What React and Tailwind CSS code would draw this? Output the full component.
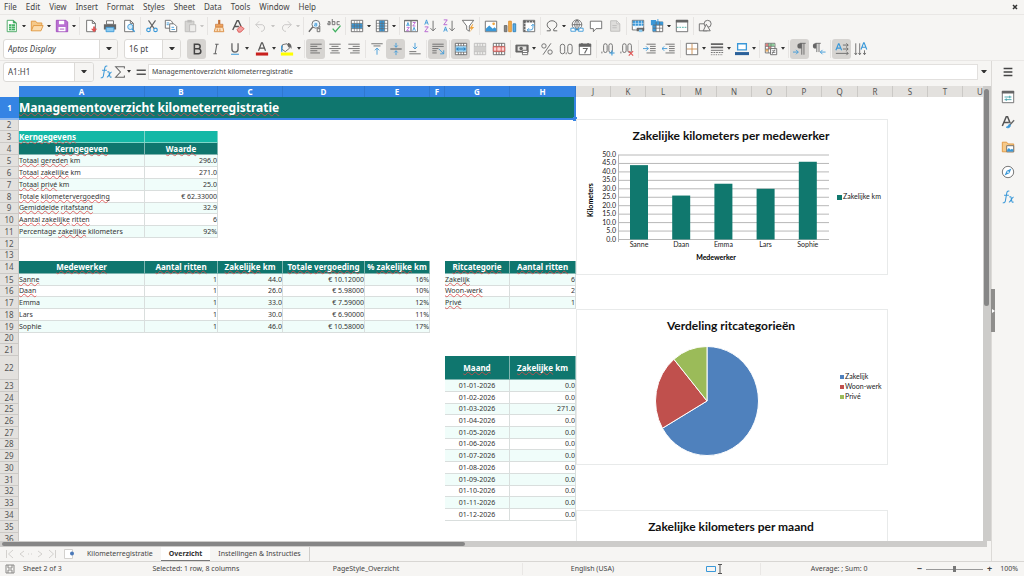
import { useState } from 'react';
import clsx from 'clsx';

const GRAY = '#666666';
const BLUE = '#3a98d8';

/* ---------- icons, all on a 16x16 canvas ---------- */

const sheetPage = <path d="M3 1.5h6.5L13 5v9.5H3zM9.5 1.5V5H13" fill="#fff" stroke={GRAY} />;
const sheetSquare = <path d="M1.5 1.5h13v13h-13z" fill="#fff" stroke={GRAY} />;
const gridLines = 'M1.5 5h13M1.5 8h13M1.5 11h13M5 2v12M8 2v12M11 2v12';

const icons = {
  new: (
    <>
      <path d="M2.5 1.5h7l3.5 3v10H2.5z" fill="#fff" stroke="#3fa35c" />
      <path d="M4.5 6h7v7h-7z" fill="#3fb05f" />
      <path d="M4.5 8.5h7M4.5 10.8h7M7.5 6v7" stroke="#d8f2df" strokeWidth=".7" />
      <path d="M9.5 1.5v3H13" fill="#3fb05f" stroke="#3fa35c" />
    </>
  ),
  open: (
    <>
      <path d="M1.5 13.5v-11h5l1.5 2h5.5v3" fill="#f5c98a" stroke="#e0953a" />
      <path d="M1.5 13.5l2.5-6h11l-2.5 6z" fill="#fbdcae" stroke="#e0953a" />
    </>
  ),
  save: (
    <>
      <path d="M1.5 1.5h11l2 2v11h-13z" fill="#b96fd2" stroke="#a04cbc" />
      <path d="M4.5 2h6v4h-6zM4 9h8v5H4z" fill="#fff" />
      <path d="M5.5 11.5h5" stroke="#a04cbc" />
    </>
  ),
  pdf: (
    <>
      {sheetPage}
      <path d="M8 11h2.5V8.5h2V11H15l-3.5 4z" fill="#e05252" />
    </>
  ),
  print: (
    <>
      <path d="M4 2h8v4H4z" fill="#fff" stroke={GRAY} />
      <path d="M1 6h14v6H1z" fill={GRAY} />
      <path d="M3.5 9.5h9v5h-9z" fill="#8ccbf0" stroke={BLUE} />
    </>
  ),
  preview: (
    <>
      {sheetPage}
      <circle cx="9.5" cy="9" r="3" fill="#d4ecfa" stroke={BLUE} />
      <path d="M11.5 11.5l3 3" stroke={BLUE} strokeWidth="1.6" />
    </>
  ),
  cut: (
    <>
      <path d="M4 1.5l6.5 9.5M12 1.5L5.5 11" stroke={GRAY} strokeWidth="1.3" />
      <circle cx="4" cy="12.5" r="2" stroke={BLUE} strokeWidth="1.3" />
      <circle cx="12" cy="12.5" r="2" stroke={BLUE} strokeWidth="1.3" />
    </>
  ),
  copy: (
    <>
      <path d="M1.5 1.5h6l2 2v7h-8z" fill="#fff" stroke={GRAY} />
      <path d="M6.5 5.5h5l3 3v6h-8z" fill="#fff" stroke={GRAY} />
      <path d="M3 4.5h3M3 6.5h2.5M8.5 9.5h3M8.5 12h4" stroke={BLUE} />
    </>
  ),
  paste: (
    <>
      <path d="M2.5 2.5h10v12h-10z" fill="#d6d5d3" stroke="#bdbcba" />
      <path d="M5 1h5v3H5z" fill="#bdbcba" />
      <path d="M7.5 6.5h7v8h-7z" fill="#eeedeb" stroke="#bdbcba" />
    </>
  ),
  brush: (
    <>
      <path d="M7 1h2.5v5H7z" fill="#c0703a" />
      <path d="M4 6h8.5v3H4z" fill="#f0a45a" stroke="#c0703a" strokeWidth=".7" />
      <path d="M4 9.5h8.5l1 5h-11z" fill="#fbe2c3" stroke="#d98a3e" />
      <path d="M6 11v3M9 11v3" stroke="#d98a3e" />
    </>
  ),
  clear: (
    <>
      <path d="M2 12.5L7 2h1.5l3 6.5M4 8.5h5" stroke="#555555" strokeWidth="1.6" />
      <path d="M7 12l4-4 4 3-4 4H8.5z" fill="#f2a0a0" stroke="#d9534f" />
    </>
  ),
  undo: <path d="M6 2.5l-4 4 4 4M2 6.5h7.5a4 4 0 0 1 0 7.5H8" stroke="#c6c5c3" />,
  redo: <path d="M10 2.5l4 4-4 4M14 6.5H6.5a4 4 0 0 0 0 7.5H8" stroke="#c6c5c3" />,
  find: (
    <>
      <circle cx="9" cy="6" r="4.5" fill="#eef7fd" stroke={GRAY} />
      <path d="M5.5 9L1 14.5" stroke={GRAY} strokeWidth="1.6" />
      <path d="M7.5 5H10v3H7.5V6.5H10" stroke={BLUE} strokeWidth=".9" />
      <path d="M13.5 8v6.5h-3V11h3" stroke={GRAY} />
    </>
  ),
  spell: (
    <>
      <path d="M1 3h2.5v3.5H1V4.5h2.5M6 0v6.5h3V3H6M14.5 3h-3v3.5h3" stroke={GRAY} />
      <path d="M6.5 11l3 3.5 6-7" stroke="#3fb05f" strokeWidth="1.4" />
    </>
  ),
  rows: (
    <>
      {sheetSquare}
      <path d="M2 5h12v6H2z" fill={BLUE} />
      <path d={gridLines} stroke={GRAY} strokeWidth=".7" />
    </>
  ),
  columns: (
    <>
      {sheetSquare}
      <path d="M5 2h6v12H5z" fill={BLUE} />
      <path d={gridLines} stroke={GRAY} strokeWidth=".7" />
    </>
  ),
  sort: (
    <>
      <path d="M.5 1.5h15v13H.5z" fill="#fff" stroke={GRAY} />
      <path d="M.5 2h15M8 2v12" stroke={GRAY} strokeWidth="1.3" />
      <path d="M3 8l1.5-4L6 8M3.5 7h2" stroke={BLUE} />
      <path d="M3 9.5h3l-3 4h3M10 4h3l-3 4h3" stroke="#b45fd0" />
      <path d="M10 13.5l1.5-4 1.5 4" stroke={BLUE} />
    </>
  ),
  sortAsc: (
    <>
      <path d="M2 6.5L4 1l2 5.5M2.8 4.5h2.5" stroke={BLUE} />
      <path d="M2 9h4l-4 5.5h4" stroke="#b45fd0" />
      <path d="M11.5 2v11.5M8.5 10.5l3 3 3-3" stroke={GRAY} />
    </>
  ),
  sortDesc: (
    <>
      <path d="M2 1h4L2 6.5h4" stroke="#b45fd0" />
      <path d="M2 14.5L4 9l2 5.5M2.8 12.5h2.5" stroke={BLUE} />
      <path d="M11.5 2v11.5M8.5 10.5l3 3 3-3" stroke={GRAY} />
    </>
  ),
  filter: (
    <>
      <path d="M1.5 1.5h13L9.5 8v6l-3-2V8z" fill="#fff" stroke={GRAY} />
      <path d="M13 6l-3.5 5H12L10 15l5-6h-2.5L14 6z" fill="#f0a43c" />
    </>
  ),
  image: (
    <>
      <path d="M1.5 2.5h13v12h-13z" fill="#fff" stroke={GRAY} />
      <path d="M2 14v-3l4-3.5 4 3.5 2-1.5 2 1.5v3z" fill={BLUE} />
      <circle cx="11" cy="5.5" r="1.5" fill="#f0a43c" />
    </>
  ),
  chart: (
    <>
      <path d="M1.5 7.5h3v7h-3z" fill="#8a8987" stroke={GRAY} />
      <path d="M6.5 2.5h3v12h-3z" fill="#f5b04c" stroke="#d98a2c" />
      <path d="M11.5 5.5h3v9h-3z" fill="#5aaee6" stroke="#2f7fb8" />
    </>
  ),
  pivot: (
    <>
      {sheetSquare}
      <path d="M1.5 3h13M3 1.5v13" stroke={GRAY} strokeWidth="2" strokeDasharray="3 .6" />
      <path d="M6 12.5h4a2.5 2.5 0 0 0 2.5-2.5V6M10.5 8l2-2 2 2M8 10.5l-2 2 2 2" stroke={BLUE} />
    </>
  ),
  omega: (
    <path d="M2 13.5h4v-2c-2.5-1.5-3.5-3-3.5-5C2.5 4 5 2 8 2s5.5 2 5.5 4.5c0 2-1 3.5-3.5 5v2h4" stroke={GRAY} strokeWidth="1.1" />
  ),
  link: (
    <>
      <circle cx="8" cy="6.5" r="5.5" fill="#fff" stroke={GRAY} />
      <path d="M2.5 6.5h11M8 1v11M8 1C4.5 4 4.5 9 8 12M8 1c3.5 3 3.5 8 0 11" stroke={GRAY} />
      <path d="M1 10.5h5.5V14H1zM9.5 10.5H15V14H9.5zM5 12.3h6" fill="#fff" stroke={BLUE} />
    </>
  ),
  comment: <path d="M1.5 2.5h13V11H8l-3 3.5V11H1.5z" fill="#fff" stroke={GRAY} />,
  note: <path d="M3 2h7l3.5 3.5V14H3zM10 2v3.5h3.5M5 7.5h5M5 10h5" fill="#dedddb" stroke="#bdbcba" />,
  headers: (
    <>
      <path d="M1.5 1.5h13v11h-13z" fill="#fff" stroke={GRAY} />
      <path d="M2 2h12v6H2z" fill={BLUE} />
      <path d="M1.5 5h13M1.5 8h13M5 2v10M8.5 2v10M12 2v6" stroke="#d4ecfa" strokeWidth=".7" />
      <path d="M6.5 10H15v4H6.5z" fill={GRAY} />
      <path d="M9 12h4v3H9z" fill="#8ccbf0" />
    </>
  ),
  freeze: (
    <>
      <path d="M3.5 3.5h11v11h-11z" fill="#fff" stroke={GRAY} />
      <path d="M1 1h6v6H1zM3 7h4v7H3zM7 3h8v4H7z" fill={BLUE} />
      <path d="M3.5 7h11M3.5 10.5h11M7 3.5v11M11 3.5v11" stroke={GRAY} strokeWidth=".8" />
      <path d="M9 0v4M7.5 2.5L9 4l1.5-1.5" stroke={BLUE} />
    </>
  ),
  split: (
    <>
      {sheetSquare}
      <path d="M1 1h14v3H1z" fill={GRAY} />
      <path d="M2 9.5h12" stroke="#3fa8a0" strokeDasharray="2 1" />
    </>
  ),
  shapes: (
    <>
      <path d="M1.5 5.5h9v8h-9z" stroke={GRAY} />
      <circle cx="11" cy="5.5" r="4" fill="#f6f5f3" stroke={GRAY} />
      <path d="M9.500 6L14 13.500H6z" fill="#f6f5f3" stroke={GRAY} />
    </>
  ),
  bold: <path d="M5 2.5h4a2.5 2.5 0 0 1 0 5.200H5zM5 7.700h4.500a2.800 2.800 0 0 1 0 5.800H5z" stroke="#444444" strokeWidth="1.7" />,
  italic: <path d="M7 2.5h4M5 13.5h4M9 2.5l-2 11" stroke={GRAY} strokeWidth="1.2" />,
  underline: (
    <>
      <path d="M4.5 1.5V8a3.5 3.5 0 0 0 7 0V1.5" stroke={GRAY} strokeWidth="1.5" />
      <path d="M3.5 14h9" stroke={BLUE} strokeWidth="1.2" />
    </>
  ),
  fontColor: (
    <>
      <path d="M4 10L7.5 1h1L12 10M5.5 7h5" stroke="#555555" strokeWidth="1.4" />
      <path d="M1 12h14v3.5H1z" fill="#c9211e" />
    </>
  ),
  highlight: (
    <>
      <path d="M1 12h14v3.5H1z" fill="#ffff00" />
      <path d="M3 3l5-1 3 5-5 4-4-3z" fill="#f6f5f3" stroke={GRAY} />
      <path d="M9 1c3 0 5 3 4 7-.5-2-2-3-4-3z" fill={GRAY} />
      <path d="M2 4v7" stroke={BLUE} strokeWidth="1.5" />
    </>
  ),
  left: <path d="M1.5 2.5h13M1.5 5h8M1.5 7.5h13M1.5 10h8M1.5 12.5h11" stroke={GRAY} />,
  center: <path d="M1.5 2.5h13M4 5h8M1.5 7.5h13M4 10h8M2.5 12.5h11" stroke={GRAY} />,
  right: <path d="M1.5 2.5h13M6.5 5h8M1.5 7.5h13M6.5 10h8M3.5 12.5h11" stroke={GRAY} />,
  top: (
    <>
      <path d="M1.5 2h13M4 4.5h8" stroke={GRAY} />
      <path d="M8 7v7.5M5.5 9.5L8 7l2.5 2.5" stroke={BLUE} />
    </>
  ),
  middle: (
    <>
      <path d="M1.5 8h13" stroke={GRAY} strokeWidth="1.3" />
      <path d="M8 1v5M6 4l2 2 2-2M8 15v-5M6 12l2-2 2 2" stroke={BLUE} />
    </>
  ),
  bottom: (
    <>
      <path d="M1.5 13.5h13M1.5 11h8" stroke={GRAY} />
      <path d="M8 1v7M5.5 5.5L8 8l2.5-2.5" stroke={BLUE} />
    </>
  ),
  wrap: (
    <>
      <path d="M1.5 2.5h13M1.5 5h13M1.5 7.5h7M1.5 10h5M1.5 12.5h5" stroke={GRAY} />
      <path d="M9 8l5.5 5.5M14.5 9.5v4h-4" stroke={BLUE} />
    </>
  ),
  merge: (
    <>
      {sheetSquare}
      <path d="M1.5 4.5h13M1.5 11.5h13M5 1.5v3M8 1.5v3M11 1.5v3M5 11.5v3M8 11.5v3M11 11.5v3" stroke={GRAY} />
      <path d="M2 5h12v6H2z" fill="#8ccbf0" />
      <path d="M3 8h10M5 6.5L3 8l2 1.5M11 6.5L13 8l-2 1.5" stroke="#1f78b8" />
    </>
  ),
  mergeCells: (
    <>
      <path d="M1.5 1.5h13v13h-13z" fill="#eeedeb" stroke="#bdbcba" />
      <path d="M1.5 5h13M1.5 11h13M5 1.5V5M8 1.5V5M11 1.5V5M5 11v3.5M8 11v3.5M11 11v3.5" stroke="#bdbcba" />
      <path d="M2 5.5h12v5H2z" fill="#cfcecc" />
    </>
  ),
  unmerge: (
    <>
      {sheetSquare}
      <path d="M1.5 5h13M1.5 11h13M5 1.5v13M8 1.5v13M11 1.5v13" stroke={GRAY} />
      <path d="M1.5 5.5h13v5h-13zM5.5 5.5v5M10.5 5.5v5" fill="#fbd5d5" stroke="#d9534f" />
    </>
  ),
  currency: (
    <>
      <path d="M1 3.5h14v8H1z" fill={GRAY} stroke={GRAY} />
      <path d="M3 5h10v5H3z" fill="#e6e5e3" />
      <circle cx="7" cy="7.5" r="2" fill={GRAY} />
      <path d="M8.5 9.5h6v5h-6z" fill="#fff" stroke={GRAY} />
      <path d="M8.5 12h6" stroke={GRAY} />
    </>
  ),
  percent: (
    <>
      <circle cx="4.5" cy="4.5" r="2.5" stroke={GRAY} />
      <circle cx="11.5" cy="11.5" r="2.5" stroke={GRAY} />
      <path d="M12.5 1.5l-9 13" stroke={GRAY} />
    </>
  ),
  number: (
    <>
      <rect x="1.5" y="2.5" width="5" height="11" rx="2.5" stroke={GRAY} />
      <rect x="10" y="2.5" width="5" height="11" rx="2.5" stroke={GRAY} />
      <path d="M8.2 12v2" stroke={GRAY} />
    </>
  ),
  date: (
    <>
      <path d="M1.5 2.5h13v12h-13z" fill="#fff" stroke={GRAY} />
      <path d="M1 2h14v3.5H1z" fill={GRAY} />
      <path d="M4.5 1v2M11.5 1v2" stroke={GRAY} strokeWidth="1.5" />
      <path d="M5.5 7.5h5L7.5 13" stroke={GRAY} strokeWidth="1.2" />
    </>
  ),
  addDecimal: (
    <>
      <path d="M1 11v2" stroke={GRAY} />
      <rect x="3" y="2" width="4" height="10" rx="2" stroke={GRAY} />
      <rect x="9" y="2" width="4" height="10" rx="2" stroke={GRAY} />
      <path d="M9.5 12.5h6M12.5 9.5v6" stroke={BLUE} strokeWidth="1.2" />
    </>
  ),
  delDecimal: (
    <>
      <path d="M1 11v2" stroke={GRAY} />
      <rect x="3" y="2" width="4" height="10" rx="2" stroke={GRAY} />
      <rect x="9" y="2" width="4" height="10" rx="2" stroke={GRAY} />
      <path d="M10 10.5l5 5M15 10.5l-5 5" stroke="#e05252" strokeWidth="1.2" />
    </>
  ),
  indent: (
    <>
      <path d="M4 2.5h10.5M8 5h6.5M8 7.5h6.5M8 10h6.5M4 12.5h10.5" stroke={GRAY} />
      <path d="M0 7.5h6M3.5 5L6 7.5 3.5 10" stroke={BLUE} />
    </>
  ),
  outdent: (
    <>
      <path d="M4 2.5h10.5M8 5h6.5M8 7.5h6.5M8 10h6.5M4 12.5h10.5" stroke={GRAY} />
      <path d="M0 7.5h6M2.5 5L0 7.5 2.5 10" stroke={BLUE} />
    </>
  ),
  borders: (
    <>
      {sheetSquare}
      <path d="M2 8h12M8 2v12" stroke="#c98a4a" />
    </>
  ),
  borderStyle: (
    <>
      <path d="M1 2.5h14M1 6h14" stroke={GRAY} strokeWidth="2" />
      <path d="M1 9.5h14" stroke={GRAY} />
      <path d="M1 12h14" stroke={GRAY} strokeDasharray="2 1" />
      <path d="M1 14.5h14" stroke={GRAY} strokeDasharray="1 1" />
    </>
  ),
  borderColor: (
    <>
      <path d="M3 2h10v7H3z" fill="#fff" stroke={BLUE} strokeWidth="1.5" />
      <path d="M0 11.5h16V15H0z" fill="#2a6099" />
    </>
  ),
  conditional: (
    <>
      <path d="M1.5 1.5h11v11h-11z" fill="#fff" stroke={GRAY} />
      <path d="M2 2h3v3H2zM5 5h3v3H5z" fill="#e98080" />
      <path d="M5 2h7v3H5z" fill="#8fd09c" />
      <path d="M2 8h3v3H2z" fill="#f0b468" />
      <path d="M1.5 5h11M1.5 8h11M5 1.5v11M8 1.5v11" stroke={GRAY} strokeWidth=".7" />
      <path d="M7.5 7.5h7v7h-7z" fill="#fff" stroke={GRAY} />
      <path d="M9 10h4M9 12h4M12.5 8.5l-3 5" stroke={GRAY} strokeWidth=".8" />
    </>
  ),
  ltr: (
    <>
      <path d="M10 1.5H8a3 3 0 0 0 0 6h2z" fill={GRAY} />
      <path d="M10 1.5v13M12.5 1.5v13M8 1.5h6.5" stroke={GRAY} />
      <path d="M0 11.5h6M3.5 9L6 11.5 3.5 14" stroke={BLUE} />
    </>
  ),
  rtl: (
    <>
      <path d="M5 1.5H4a3 3 0 0 0 0 6h1z" fill={GRAY} />
      <path d="M5.5 1.5v10M8 1.5v10M4 1.5h6" stroke={GRAY} />
      <path d="M9.5 11.5h6M12 9l-2.5 2.5L12 14" stroke={BLUE} />
    </>
  ),
  textRow: (
    <>
      <path d="M1 9.5L4 2h.6l3 7.5M2.2 7h4" stroke={BLUE} strokeWidth="1.3" />
      <path d="M9 3.5h6M13 1.5l2 2-2 2M9 8h6M13 6l2 2-2 2M1 13h14M13 11l2 2-2 2" stroke={GRAY} />
    </>
  ),
  textColumn: (
    <>
      <path d="M8 8.5L11 1h.6l3 7.5M9.2 6h4" stroke={BLUE} strokeWidth="1.3" />
      <path d="M2 1.5v13M.5 12.5l1.5 2 1.5-2M6.5 1.5v13M5 12.5l1.5 2 1.5-2M12 9.5v5M10.5 12.5l1.5 2 1.5-2" stroke={GRAY} />
    </>
  ),
  fx: (
    <path
      d="M9.5 1.5C7.5.5 6.8 2 6.5 4L5 12.5c-.4 2-1.5 2.5-3 2M3.5 6H9M9.5 8c2-1 2 0 2.5 3s1 3.5 2.5 2.5M14.5 8c-2 0-3.5 6-5.5 6"
      stroke={BLUE}
      strokeWidth="1.2"
    />
  ),
  sigma: <path d="M13 4V2H3l5.5 6L3 14h10v-2" stroke={GRAY} strokeWidth="1.2" />,
  equals: <path d="M3 6h10.5M3 10.5h10.5" stroke="#555555" strokeWidth="1.7" />,
  menu: <path d="M3 4h10M3 8h10M3 12h10" stroke="#444444" strokeWidth="1.7" />,
  properties: (
    <>
      {sheetSquare}
      <path d="M1 1h14v3H1z" fill={GRAY} />
      <path d="M4 8h8M4 11h8M10 6.5v3M6 9.5v3" stroke="#3fa0a8" />
    </>
  ),
  styles: (
    <>
      <path d="M1.5 12.5L6 2h1.5l3 7.5M3 8.5h6" stroke="#555555" strokeWidth="1.7" />
      <path d="M15 6l-5 5.5" stroke={GRAY} strokeWidth="1.5" />
      <path d="M10.5 11c-3 0-2.5 2.5-4.5 3 2 1.5 5.5 0 4.5-3z" fill={BLUE} stroke={BLUE} />
    </>
  ),
  gallery: (
    <>
      <path d="M1.5 13.5v-11h5l1.5 2h6.5v9z" fill="#f5c98a" stroke="#e0953a" />
      <path d="M6.5 6.5h8v7h-8z" fill="#fff" stroke={GRAY} />
      <path d="M7 13v-2l2-2 2 2 1.5-1 1.5 1v2z" fill={BLUE} />
    </>
  ),
  navigator: (
    <>
      <circle cx="8" cy="8" r="6.5" fill="#fff" stroke={GRAY} />
      <path d="M12 4L9.5 9.5 4 12l2.5-5.5z" fill={BLUE} />
      <circle cx="8" cy="8" r="1" fill="#fff" />
    </>
  ),
};

function Icon({ name }) {
  return (
    <svg viewBox="0 0 16 16" fill="none" className="h-3.5 w-3.5 shrink-0" aria-hidden="true">
      {icons[name]}
    </svg>
  );
}

function Caret({ muted }) {
  return (
    <svg viewBox="0 0 6 4" className="w-1 shrink-0" aria-hidden="true">
      <path d="M0 0h6L3 4z" fill={muted ? '#c6c5c3' : '#333333'} />
    </svg>
  );
}

/* ---------- toolbars ---------- */

// [icon, label, options] or null for a separator
const standardBar = [
  ['new', 'New', { menu: true }],
  ['open', 'Open', { menu: true }],
  ['save', 'Save', { menu: true }],
  null,
  ['pdf', 'Export as PDF'],
  ['print', 'Print'],
  ['preview', 'Print Preview'],
  null,
  ['cut', 'Cut'],
  ['copy', 'Copy'],
  ['paste', 'Paste', { menu: true, muted: true }],
  null,
  ['brush', 'Clone Formatting'],
  ['clear', 'Clear Direct Formatting'],
  null,
  ['undo', 'Undo', { menu: true, muted: true }],
  ['redo', 'Redo', { menu: true, muted: true }],
  null,
  ['find', 'Find and Replace'],
  ['spell', 'Spelling'],
  null,
  ['rows', 'Row', { menu: true }],
  ['columns', 'Column', { menu: true }],
  null,
  ['sort', 'Sort'],
  ['sortAsc', 'Sort Ascending'],
  ['sortDesc', 'Sort Descending'],
  ['filter', 'AutoFilter'],
  null,
  ['image', 'Insert Image'],
  ['chart', 'Insert Chart'],
  ['pivot', 'Pivot Table'],
  null,
  ['omega', 'Special Character', { menu: true }],
  ['link', 'Hyperlink'],
  ['comment', 'Comment'],
  ['note', 'Note', { muted: true }],
  null,
  ['headers', 'Print Area'],
  ['freeze', 'Freeze Rows and Columns', { menu: true }],
  ['split', 'Split Window'],
  null,
  ['shapes', 'Show Draw Functions'],
];

const fontBar = [
  ['bold', 'Bold', { on: true }],
  ['italic', 'Italic'],
  ['underline', 'Underline', { menu: true }],
];

const formatBar = [
  ['fontColor', 'Font Color', { menu: true }],
  ['highlight', 'Background Color', { menu: true }],
  null,
  ['left', 'Align Left', { on: true }],
  ['center', 'Align Center'],
  ['right', 'Align Right'],
  null,
  ['top', 'Align Top'],
  ['middle', 'Center Vertically', { on: true }],
  ['bottom', 'Align Bottom'],
  null,
  ['wrap', 'Wrap Text', { on: true }],
  null,
  ['merge', 'Merge and Center', { on: true }],
  ['mergeCells', 'Merge Cells', { muted: true }],
  ['unmerge', 'Unmerge Cells'],
  null,
  ['currency', 'Format as Currency', { menu: true }],
  ['percent', 'Format as Percent'],
  ['number', 'Format as Number'],
  ['date', 'Format as Date'],
  null,
  ['addDecimal', 'Add Decimal Place'],
  ['delDecimal', 'Delete Decimal Place'],
  null,
  ['indent', 'Increase Indent'],
  ['outdent', 'Decrease Indent'],
  null,
  ['borders', 'Borders', { menu: true }],
  ['borderStyle', 'Border Style', { menu: true }],
  ['borderColor', 'Border Color', { menu: true }],
  null,
  ['conditional', 'Conditional Formatting', { menu: true }],
  null,
  ['ltr', 'Left-To-Right', { on: true }],
  ['rtl', 'Right-To-Left'],
  null,
  ['textRow', 'Text direction from left to right', { on: true }],
  ['textColumn', 'Text direction from top to bottom'],
];

function ToolItems({ items }) {
  return items.map((item, i) => {
    if (!item) return <span key={i} className="mr-px ml-0.5 h-[18px] w-px bg-[#e6e4e2]" />;
    const [icon, label, { menu, muted, on } = {}] = item;
    return (
      <span key={i} className="flex shrink-0 items-center">
        <button
          aria-label={label}
          disabled={muted}
          className={clsx('flex h-5 w-[19px] items-center justify-center rounded-[3px]', on && 'bg-[#d6d4d1]')}
        >
          <Icon name={icon} />
        </button>
        {menu && (
          <button aria-label={`${label} options`} disabled={muted} className="flex h-5 w-1.5 items-center justify-center">
            <Caret muted={muted} />
          </button>
        )}
      </span>
    );
  });
}

function Combo({ label, value, className, buttonClass }) {
  return (
    <div className={clsx('flex h-5 shrink-0 overflow-hidden rounded-[3px] border border-[#dcdad7] bg-white', className)}>
      <input aria-label={label} defaultValue={value} className="min-w-0 flex-1 pl-1 outline-none" />
      <button
        aria-label={`${label} list`}
        className={clsx('flex items-center justify-center border-l border-[#dcdad7] bg-[#f6f5f3]', buttonClass)}
      >
        <svg viewBox="0 0 8 5" className="w-1.5" aria-hidden="true">
          <path d="M0 0h8L4 5z" fill="#333333" />
        </svg>
      </button>
    </div>
  );
}

/* ---------- sheet data ---------- */

const columns = [
  ['A', 'w-[126px]'],
  ['B', 'w-[73px]'],
  ['C', 'w-[65px]'],
  ['D', 'w-[82px]'],
  ['E', 'w-[65px]'],
  ['F', 'w-[15px]'],
  ['G', 'w-[65px]'],
  ['H', 'w-[66px]'],
  ['J', 'w-[35px]'],
  ['K', 'w-[35px]'],
  ['L', 'w-[35px]'],
  ['M', 'w-9'],
  ['N', 'w-[35px]'],
  ['O', 'w-[35px]'],
  ['P', 'w-[35px]'],
  ['Q', 'w-9'],
  ['R', 'w-[35px]'],
  ['S', 'w-[35px]'],
  ['T', 'w-[35px]'],
  ['U', 'w-[35px]'],
];

const shortRows = [2, 9, 13, 16, 20, 25, 28, 32];

const rowHeight = (row) => {
  if (row === 22) return 'h-6';
  if (row === 14) return 'h-[13px]';
  return shortRows.includes(row) ? 'h-[11px]' : 'h-3';
};

// ~word~ is a word the spell checker underlines
const cells = {};
const fill = (startRow, cols, kind, rows) => {
  rows.forEach((values, r) => {
    values.forEach((text, c) => {
      cells[`${cols[c]}${startRow + r}`] = { text, kind };
    });
  });
};

fill(3, 'AB', 'section', [['~Kerngegevens~', '']]);
fill(4, 'AB', 'head', [['~Kerngegeven~', '~Waarde~']]);
fill(5, 'AB', 'body', [
  ['~Totaal~ ~gereden~ km', '296.0'],
  ['~Totaal~ ~zakelijke~ km', '271.0'],
  ['~Totaal~ ~privé~ km', '25.0'],
  ['~Totale~ ~kilometervergoeding~', '€ 62.33000'],
  ['~Gemiddelde~ ~ritafstand~', '32.9'],
  ['~Aantal~ ~zakelijke~ ~ritten~', '6'],
  ['Percentage ~zakelijke~ kilometers', '92%'],
]);
fill(14, 'ABCDE', 'head', [
  ['~Medewerker~', '~Aantal~ ~ritten~', '~Zakelijke~ km', '~Totale~ ~vergoeding~', '% ~zakelijke~ km'],
]);
fill(15, 'ABCDE', 'body', [
  ['~Sanne~', '1', '44.0', '€ 10.12000', '16%'],
  ['~Daan~', '1', '26.0', '€ 5.98000', '10%'],
  ['Emma', '1', '33.0', '€ 7.59000', '12%'],
  ['Lars', '1', '30.0', '€ 6.90000', '11%'],
  ['Sophie', '1', '46.0', '€ 10.58000', '17%'],
]);
fill(14, 'GH', 'head', [['~Ritcategorie~', '~Aantal~ ~ritten~']]);
fill(15, 'GH', 'body', [
  ['~Zakelijk~', '6'],
  ['~Woon-werk~', '2'],
  ['~Privé~', '1'],
]);
fill(22, 'GH', 'head', [['~Maand~', '~Zakelijke~ km']]);
fill(
  23,
  'GH',
  'body',
  Array.from({ length: 12 }, (_, m) => [`01-${String(m + 1).padStart(2, '0')}-2026`, m === 2 ? '271.0' : '0.0'])
);

function Spelled({ text }) {
  return text.split('~').map((part, i) =>
    i % 2 ? (
      <span
        key={i}
        className="underline decoration-[#e04848]/80 decoration-wavy decoration-1 underline-offset-0 [text-decoration-skip-ink:none]"
      >
        {part}
      </span>
    ) : (
      part
    )
  );
}

function Cell({ cell, row }) {
  if (!cell) return <td className="p-0" />;
  const { text, kind } = cell;
  const isDate = /^\d\d-/.test(text);
  return (
    <td
      className={clsx(
        'border-r border-b p-0 whitespace-nowrap',
        kind === 'section' && 'border-[#7fd6c9] bg-[#14b8a6] text-left font-bold text-white',
        kind === 'head' && 'border-[#7fb5b0] bg-[#0f766e] text-center font-bold text-white',
        kind === 'body' && 'border-[#d9dedd] text-[7px] text-[#333333]',
        kind === 'body' && (row % 2 ? 'bg-[#f0fdfa]' : 'bg-white'),
        kind === 'body' && (isDate ? 'text-center' : /^[\d€]/.test(text) ? 'text-right' : 'text-left')
      )}
    >
      <Spelled text={text} />
    </td>
  );
}

function Grid() {
  return (
    <table className="w-px table-fixed border-separate border-spacing-0 text-[8px] leading-[10px]">
      <colgroup>
        <col className="w-[19px]" />
        {columns.map(([name, width]) => (
          <col key={name} className={width} />
        ))}
      </colgroup>
      <thead>
        <tr className="h-[11px]">
          <td className="bg-[#f6f5f3] p-0" />
          {columns.map(([name], i) => (
            <th
              key={name}
              scope="col"
              className={clsx(
                'border-r p-0',
                i < 8 ? 'border-[#2f78d0] bg-[#3584e4] text-white' : 'border-[#cbc9c6] bg-[#e3e1de] font-normal text-[#555555]'
              )}
            >
              {name}
            </th>
          ))}
        </tr>
      </thead>
      <tbody>
        <tr className="h-[23px]">
          <th scope="row" className="border-b-2 border-[#8fb9ee] bg-[#3584e4] p-0 text-white">
            1
          </th>
          <td
            colSpan={8}
            className="relative border-2 border-t-0 border-l-0 border-[#3584e4] bg-[#0f766e] p-0 text-[12px] leading-5 font-bold whitespace-nowrap text-white"
          >
            <Spelled text="~Managementoverzicht~ ~kilometerregistratie~" />
            <span className="absolute -right-[3px] -bottom-[3px] h-1 w-1 bg-[#3584e4]" />
          </td>
        </tr>
        {Array.from({ length: 35 }, (_, i) => i + 2).map((row) => (
          <tr key={row} className={rowHeight(row)}>
            <th scope="row" className="border-r border-b border-[#cbc9c6] bg-[#e3e1de] p-0 font-normal text-[#555555]">
              {row}
            </th>
            {columns.map(([name]) => (
              <Cell key={name} cell={cells[name + row]} row={row} />
            ))}
          </tr>
        ))}
      </tbody>
    </table>
  );
}

/* ---------- charts ---------- */

const kmPerEmployee = [
  ['Sanne', 44],
  ['Daan', 26],
  ['Emma', 33],
  ['Lars', 30],
  ['Sophie', 46],
];

const categories = [
  ['Zakelijk', 6, '#4f81bd'],
  ['Woon-werk', 2, '#c0504d'],
  ['Privé', 1, '#9bbb59'],
];

function ChartFrame({ title, className, children }) {
  return (
    <svg
      viewBox="1 0 310 154"
      role="img"
      aria-label={title}
      className={clsx(
        "absolute left-[577px] h-[154px] w-[310px] bg-white font-['Lato',sans-serif] text-[7px] outline outline-[#e8eaea]",
        className
      )}
    >
      <text x="155" y="20" textAnchor="middle" className="fill-[#111111] text-[12px] font-bold">
        {title}
      </text>
      {children}
    </svg>
  );
}

function BarChart() {
  const yOf = (v) => 119.5 - v * 1.69;
  return (
    <ChartFrame title="Zakelijke kilometers per medewerker" className="top-[34px]">
      {Array.from({ length: 11 }, (_, i) => i * 5).map((v) => (
        <g key={v}>
          <path d={`M42 ${yOf(v)}H253`} stroke="#b8b8b8" />
          <text x="40" y={yOf(v) + 2} textAnchor="end" fill="#222222">
            {v.toFixed(1)}
          </text>
        </g>
      ))}
      <path d="M42.5 35V122" stroke="#b8b8b8" />
      {kmPerEmployee.map(([name, km], i) => (
        <g key={name}>
          <rect x={54 + i * 42.2} y={yOf(km)} width="18" height={km * 1.69} fill="#10786e" />
          <text x={63 + i * 42.2} y="127" textAnchor="middle" fill="#222222">
            {name}
          </text>
        </g>
      ))}
      <text x="140" y="140" textAnchor="middle" className="font-bold">
        Medewerker
      </text>
      <text transform="translate(17 80) rotate(-90)" textAnchor="middle" className="font-bold">
        Kilometers
      </text>
      <rect x="261" y="75" width="5" height="5" fill="#10786e" />
      <text x="267" y="79" fill="#222222">
        Zakelijke km
      </text>
    </ChartFrame>
  );
}

function PieChart() {
  const total = categories.reduce((sum, [, n]) => sum + n, 0);
  const point = (n) => {
    const a = (n / total) * 2 * Math.PI;
    return `${131 + 51.5 * Math.sin(a)} ${91 - 54.5 * Math.cos(a)}`;
  };
  let start = 0;
  return (
    <ChartFrame title="Verdeling ritcategorieën" className="top-[224px]">
      {categories.map(([name, n, color], i) => {
        const from = start;
        start += n;
        return (
          <g key={name}>
            <path
              d={`M131 91L${point(from)}A51.5 54.5 0 ${n > total / 2 ? 1 : 0} 1 ${point(start)}Z`}
              fill={color}
              stroke="#ffffff"
            />
            <rect x="264" y={65 + i * 10} width="4" height="4" fill={color} />
            <text x="269" y={69 + i * 10} fill="#222222">
              {name}
            </text>
          </g>
        );
      })}
    </ChartFrame>
  );
}

/* ---------- page ---------- */

const menus = ['File', 'Edit', 'View', 'Insert', 'Format', 'Styles', 'Sheet', 'Data', 'Tools', 'Window', 'Help'];
const sheets = ['Kilometerregistratie', 'Overzicht', 'Instellingen & Instructies'];
const sidebar = [
  ['menu', 'Sidebar Settings'],
  ['properties', 'Properties'],
  ['styles', 'Styles'],
  ['gallery', 'Gallery'],
  ['navigator', 'Navigator'],
  ['fx', 'Functions'],
];

export default function App() {
  const [activeSheet, setActiveSheet] = useState('Overzicht');
  const [zoom, setZoom] = useState(100);

  return (
    <div className="flex h-screen flex-col overflow-hidden bg-[#f6f5f3] font-['Noto_Sans',sans-serif] text-[8px] leading-3 text-[#444444]">
      {/* Menu bar */}
      <nav className="flex h-[15px] shrink-0 items-center gap-[9px] border-b border-[#e9e7e5] pr-1.5 pl-1">
        {menus.map((name) => (
          <button key={name}>{name}</button>
        ))}
        <button aria-label="Close Document" className="ml-auto">
          <svg viewBox="0 0 6 6" className="h-1.5 w-1.5" aria-hidden="true">
            <path d="M1 1l4 4M5 1L1 5" stroke="#333333" strokeWidth="1.5" />
          </svg>
        </button>
      </nav>

      {/* Toolbars */}
      <div className="flex h-[22px] shrink-0 items-center pl-0.5">
        <ToolItems items={standardBar} />
      </div>
      <div className="flex h-6 shrink-0 items-center border-b border-[#e9e7e5] pl-[3px]">
        <Combo label="Font Name" value="Aptos Display" className="w-[115px] italic" buttonClass="w-[18px]" />
        <Combo label="Font Size" value="16 pt" className="mx-1.5 w-[57px]" buttonClass="w-[18px]" />
        <ToolItems items={fontBar} />
        <span className="w-0.5 shrink-0" />
        <ToolItems items={formatBar} />
      </div>

      <div className="flex min-h-0 flex-1">
        <main className="flex min-w-0 flex-1 flex-col">
          {/* Formula bar */}
          <div className="flex h-[25px] shrink-0 items-center pr-1 pb-1 pl-[3px]">
            <Combo label="Name Box" value="A1:H1" className="w-[91px]" buttonClass="w-[19px]" />
            <button aria-label="Function Wizard" className="ml-[5px]">
              <Icon name="fx" />
            </button>
            <button aria-label="Select Function" className="flex items-center">
              <Icon name="sigma" />
              <Caret />
            </button>
            <button aria-label="Formula" className="ml-[3px]">
              <Icon name="equals" />
            </button>
            <input
              aria-label="Input line"
              defaultValue="Managementoverzicht kilometerregistratie"
              className="h-4 min-w-0 flex-1 border border-[#e2e0de] bg-white pl-[3px] text-[7px] outline-none"
            />
            <button aria-label="Expand Formula Bar" className="ml-[3px]">
              <svg viewBox="0 0 8 5" className="w-1.5" aria-hidden="true">
                <path d="M0 0h8L4 5z" fill="#333333" />
              </svg>
            </button>
          </div>

          {/* Sheet */}
          <div className="flex min-h-0 flex-1">
            <div className="relative min-w-0 flex-1 overflow-hidden bg-white">
              <Grid />
              <BarChart />
              <PieChart />
              <ChartFrame title="Zakelijke kilometers per maand" className="top-[425px]" />
            </div>
            <div className="w-2 shrink-0 bg-[#cdccca] px-px pt-[3px]">
              <div className="h-[48%] w-[5px] rounded-full bg-[#868686]" />
            </div>
          </div>
          <div className="mr-1 h-1.5 shrink-0 bg-[#cdccca] p-px">
            <div className="ml-px h-1 w-[47%] rounded-full bg-[#868686]" />
          </div>

          {/* Sheet tabs */}
          <div className="flex h-3.5 shrink-0 items-center text-[7px]">
            <svg viewBox="0 0 52 10" fill="none" stroke="#d3d1ce" className="ml-[5px] h-2.5 w-[52px]" aria-hidden="true">
              <path d="M1.5 1v8M8 1L3.5 5 8 9M19 2l-4 3 4 3M23 5h1M26 5h1M33 2l4 3-4 3M44 1l4.5 4L44 9M50.5 1v8" />
            </svg>
            <button aria-label="Add Sheet" className="ml-1.5">
              <svg viewBox="0 0 12 12" className="h-3 w-3" aria-hidden="true">
                <path d="M1.5 1.5h8v9h-8z" fill="#ffffff" stroke="#d3d1ce" />
                <circle cx="9" cy="5.5" r="2" fill="#4a78b8" />
              </svg>
            </button>
            <div className="ml-1 flex h-full items-stretch border-r border-[#cfcdca]">
              {sheets.map((name) => (
                <button
                  key={name}
                  onClick={() => setActiveSheet(name)}
                  className={clsx(
                    'border-b px-2',
                    activeSheet === name ? 'border-[#777777] bg-white font-bold text-[#333333]' : 'border-transparent'
                  )}
                >
                  {name}
                </button>
              ))}
            </div>
          </div>
        </main>

        {/* Sidebar */}
        <aside className="relative flex w-[33px] shrink-0 flex-col items-center gap-[11px] border-l border-[#dcdad7] pt-1">
          {sidebar.map(([icon, label]) => (
            <button key={label} aria-label={label}>
              <Icon name={icon} />
            </button>
          ))}
          <button
            aria-label="Hide Sidebar"
            className="absolute top-[228px] -left-px flex h-[43px] w-1 items-center justify-center bg-[#8f8e8c]"
          >
            <svg viewBox="0 0 3 4" className="w-[3px]" aria-hidden="true">
              <path d="M0 0l3 2-3 2z" fill="#ffffff" />
            </svg>
          </button>
        </aside>
      </div>

      {/* Status bar */}
      <footer className="flex h-[15px] shrink-0 items-center border-t border-[#d8d6d3] pr-1.5 pl-[5px] text-[7px] whitespace-nowrap">
        <svg viewBox="0 0 10 10" fill="none" stroke="#8a8987" className="mr-2 h-2.5 w-2.5" aria-hidden="true">
          <path d="M1 1h8v8H1zM3 1v3h4V1M3 9V6h4v3" />
        </svg>
        <span className="flex-[130]">Sheet 2 of 3</span>
        <span className="flex-[181]">Selected: 1 row, 8 columns</span>
        <span className="flex-[190]">PageStyle_Overzicht</span>
        <span className="flex-[139] border-l border-[#e9e7e5] text-center">English (USA)</span>
        <span className="flex-[44] border-l border-[#e9e7e5]" />
        <svg viewBox="0 0 16 10" fill="none" className="h-2.5 w-4" aria-hidden="true">
          <path d="M.5 2.5h9v5h-9z" stroke={BLUE} />
          <path d="M12 .5h4M12 9.5h4M14 .5v9" stroke="#555555" />
        </svg>
        <span className="flex-[38]" />
        <span className="flex-[156] border-l border-[#e9e7e5] text-center">Average: ; Sum: 0</span>
        <label className="flex items-center gap-1">
          <span className="text-[9px] font-bold">−</span>
          <input
            type="range"
            aria-label="Zoom"
            min="0"
            max="200"
            value={zoom}
            onChange={(e) => setZoom(Number(e.target.value))}
            className="h-px w-[57px] appearance-none bg-[#999999] [&::-webkit-slider-thumb]:h-1.5 [&::-webkit-slider-thumb]:w-[3px] [&::-webkit-slider-thumb]:appearance-none [&::-webkit-slider-thumb]:bg-[#777777]"
          />
          <span className="text-[9px] font-bold">+</span>
        </label>
        <span className="ml-2">{zoom}%</span>
      </footer>
    </div>
  );
}
